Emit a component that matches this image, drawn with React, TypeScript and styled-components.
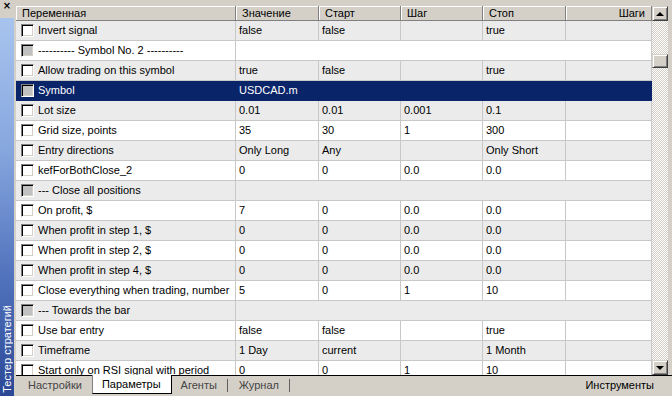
import styled, { createGlobalStyle } from 'styled-components';

const GlobalStyle = createGlobalStyle`
  html, body {
    margin: 0;
    padding: 0;
  }
  body {
    font-family: "Liberation Sans", Arial, sans-serif;
    font-size: 11px;
    background: #d4d0c8;
  }
`;

type Kind = 'normal' | 'group' | 'selected';

type Param = {
  name: string;
  value?: string;
  start?: string;
  step?: string;
  stop?: string;
  kind?: Kind;
};

const params: Param[] = [
  { name: 'Invert signal', value: 'false', start: 'false', stop: 'true' },
  { name: '---------- Symbol No. 2 ----------', kind: 'group' },
  { name: 'Allow trading on this symbol', value: 'true', start: 'false', stop: 'true' },
  { name: 'Symbol', value: 'USDCAD.m', kind: 'selected' },
  { name: 'Lot size', value: '0.01', start: '0.01', step: '0.001', stop: '0.1' },
  { name: 'Grid size, points', value: '35', start: '30', step: '1', stop: '300' },
  { name: 'Entry directions', value: 'Only Long', start: 'Any', stop: 'Only Short' },
  { name: 'kefForBothClose_2', value: '0', start: '0', step: '0.0', stop: '0.0' },
  { name: '--- Close all positions', kind: 'group' },
  { name: 'On profit, $', value: '7', start: '0', step: '0.0', stop: '0.0' },
  { name: 'When profit in step 1, $', value: '0', start: '0', step: '0.0', stop: '0.0' },
  { name: 'When profit in step 2, $', value: '0', start: '0', step: '0.0', stop: '0.0' },
  { name: 'When profit in step 4, $', value: '0', start: '0', step: '0.0', stop: '0.0' },
  { name: 'Close everything when trading, number', value: '5', start: '0', step: '1', stop: '10' },
  { name: '--- Towards the bar', kind: 'group' },
  { name: 'Use bar entry', value: 'false', start: 'false', stop: 'true' },
  { name: 'Timeframe', value: '1 Day', start: 'current', stop: '1 Month' },
  { name: 'Start only on RSI signal with period', value: '0', start: '0', step: '1', stop: '10' },
];

const COLUMNS = '220px 83px 82px 82px 83px 1fr';

const App = () => {
  return (
    <>
      <GlobalStyle />
      <Frame>
        <SideBar>
          <CloseBox>×</CloseBox>
          <SideTitle>
            <SideText>Тестер стратегий</SideText>
          </SideTitle>
        </SideBar>

        <Main>
          <Body>
            <Grid>
              <HeaderRow>
                <HeaderCell>Переменная</HeaderCell>
                <HeaderCell>Значение</HeaderCell>
                <HeaderCell>Старт</HeaderCell>
                <HeaderCell>Шаг</HeaderCell>
                <HeaderCell>Стоп</HeaderCell>
                <HeaderCell $right>Шаги</HeaderCell>
              </HeaderRow>

              {params.map((p, i) => {
                const kind = p.kind ?? 'normal';
                const tone = kind === 'selected' ? 'selected' : i % 2 === 0 ? 'grey' : 'white';
                return (
                  <Row key={p.name} $tone={tone} $merged={kind === 'group'}>
                    <NameCell $tone={tone}>
                      <CheckBox $disabled={kind !== 'normal'} />
                      {p.name}
                    </NameCell>
                    {kind === 'group' ? (
                      <Cell $tone={tone} />
                    ) : (
                      <>
                        <Cell $tone={tone}>{p.value}</Cell>
                        <Cell $tone={tone}>{p.start}</Cell>
                        <Cell $tone={tone}>{p.step}</Cell>
                        <Cell $tone={tone}>{p.stop}</Cell>
                        <Cell $tone={tone} />
                      </>
                    )}
                  </Row>
                );
              })}
            </Grid>

            <ScrollBar>
              <ScrollButton>
                <Arrow />
              </ScrollButton>
              <Thumb />
              <Track />
              <ScrollButton>
                <Arrow $down />
              </ScrollButton>
            </ScrollBar>
          </Body>

          <TabBar>
            <Tab>Настройки</Tab>
            <Tab $active>Параметры</Tab>
            <Tab>Агенты</Tab>
            <TabDivider />
            <Tab>Журнал</Tab>
            <TabDivider />
            <Spacer />
            <ToolsTab>Инструменты</ToolsTab>
          </TabBar>
        </Main>
      </Frame>
    </>
  );
};

type Tone = 'grey' | 'white' | 'selected';

const rowBg = (t: Tone) => (t === 'selected' ? '#0a246a' : t === 'grey' ? '#ebebeb' : '#ffffff');

const Frame = styled.div`
  display: flex;
  width: 672px;
  height: 396px;
  background: #d4d0c8;
  overflow: hidden;
`;

const SideBar = styled.div`
  width: 14px;
  margin-right: 2px;
  display: flex;
  flex-direction: column;
`;

const CloseBox = styled.div`
  height: 18px;
  font-family: "DejaVu Sans", sans-serif;
  font-weight: bold;
  font-size: 10px;
  line-height: 11px;
  text-align: center;
  color: #000;
`;

const SideTitle = styled.div`
  flex: 1;
  display: flex;
  align-items: flex-end;
  justify-content: center;
  padding-bottom: 3px;
  background: linear-gradient(to bottom, #a8c4ee 0%, #86a6de 35%, #4f70bb 70%, #2b4896 100%);
`;

const SideText = styled.span`
  writing-mode: vertical-rl;
  transform: rotate(180deg);
  color: #fff;
  font-size: 11px;
  line-height: 14px;
  white-space: nowrap;
`;

const Main = styled.div`
  flex: 1;
  display: flex;
  flex-direction: column;
  padding-top: 6px;
`;

const Body = styled.div`
  display: flex;
  height: 369px;
  padding-right: 4px;
`;

const Grid = styled.div`
  width: 636px;
  overflow: hidden;
  background: #fff;
`;

const HeaderRow = styled.div`
  display: grid;
  grid-template-columns: ${COLUMNS};
  height: 15px;
`;

const HeaderCell = styled.div<{ $right?: boolean }>`
  box-sizing: border-box;
  background: #d4d0c8;
  border-right: 1px solid #808080;
  border-bottom: 1px solid #808080;
  box-shadow: inset 1px 1px #fff;
  padding: 0 6px;
  line-height: 14px;
  color: #000;
  text-align: ${(p) => (p.$right ? 'right' : 'left')};
  white-space: nowrap;
`;

const Row = styled.div<{ $tone: Tone; $merged: boolean }>`
  display: grid;
  grid-template-columns: ${(p) => (p.$merged ? '220px 1fr' : COLUMNS)};
  height: 20px;
  box-sizing: border-box;
  border-bottom: 1px solid ${(p) => (p.$tone === 'selected' ? '#0a246a' : '#c8c8c8')};
  background: ${(p) => rowBg(p.$tone)};
  color: ${(p) => (p.$tone === 'selected' ? '#fff' : '#000')};
`;

const Cell = styled.div<{ $tone: Tone }>`
  border-right: 1px solid ${(p) => (p.$tone === 'selected' ? '#0a246a' : '#c8c8c8')};
  padding-left: 3px;
  line-height: 19px;
  white-space: nowrap;
  overflow: hidden;
`;

const NameCell = styled(Cell)`
  display: flex;
  align-items: center;
  gap: 4px;
  padding-left: 5px;
`;

const CheckBox = styled.span<{ $disabled: boolean }>`
  flex: none;
  width: 13px;
  height: 13px;
  box-sizing: border-box;
  background: ${(p) => (p.$disabled ? '#c0c0c0' : '#fff')};
  border: 1px solid;
  border-color: #808080 #fff #fff #808080;
  box-shadow: inset 1px 1px #000, inset -1px -1px #d4d0c8;
`;

const ScrollBar = styled.div`
  width: 16px;
  display: flex;
  flex-direction: column;
  background: repeating-conic-gradient(#d4d0c8 0 25%, #fff 0 50%) 0 0 / 2px 2px;
`;

const ScrollButton = styled.div`
  height: 15px;
  flex: none;
  box-sizing: border-box;
  background: #d4d0c8;
  border: 1px solid;
  border-color: #d4d0c8 #404040 #404040 #d4d0c8;
  box-shadow: inset 1px 1px #fff, inset -1px -1px #808080;
  display: flex;
  align-items: center;
  justify-content: center;
`;

const Thumb = styled(ScrollButton)`
  height: 14px;
  margin-top: 33px;
`;

const Track = styled.div`
  flex: 1;
`;

const Arrow = styled.span<{ $down?: boolean }>`
  width: 0;
  height: 0;
  border-left: 4px solid transparent;
  border-right: 4px solid transparent;
  ${(p) => (p.$down ? 'border-top: 4px solid #000;' : 'border-bottom: 4px solid #000;')}
`;

const TabBar = styled.div`
  height: 21px;
  box-sizing: border-box;
  border-top: 1px solid #000;
  display: flex;
  align-items: flex-start;
  padding-left: 3px;
  padding-right: 18px;
`;

const Tab = styled.div<{ $active?: boolean }>`
  padding: 0 10px 0 9px;
  line-height: 18px;
  white-space: nowrap;
  color: ${(p) => (p.$active ? '#000' : '#444')};
  ${(p) =>
    p.$active &&
    `
    background: #fff;
    margin-top: -1px;
    border-left: 1px solid #808080;
    border-right: 1px solid #000;
    border-bottom: 1px solid #000;
  `}
`;

const TabDivider = styled.span`
  width: 1px;
  height: 13px;
  margin: 3px 2px 0 0;
  background: #606060;
`;

const Spacer = styled.div`
  flex: 1;
`;

const ToolsTab = styled.div`
  line-height: 18px;
  color: #000;
  white-space: nowrap;
`;

export default App;
